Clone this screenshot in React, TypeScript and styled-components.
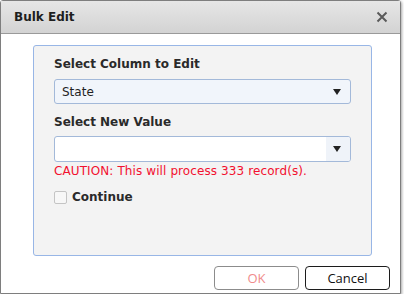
import React from 'react';
import styled, { createGlobalStyle } from 'styled-components';

const GlobalStyle = createGlobalStyle`
    html, body {
        margin: 0;
        padding: 0;
        background: #ffffff;
    }
    * {
        box-sizing: border-box;
    }
`;

const colors = {
    label: '#2a2a2a',
    panelBorder: '#98b6e6',
    fieldBorder: '#a3b9d9',
    caution: '#f2102f',
};

const Dialog = styled.div`
    width: 401px;
    height: 294px;
    border: 1px solid #7e7e7e;
    border-radius: 3px 3px 0 0;
    background: #ffffff;
    box-shadow: 1px 1px 3px rgba(0, 0, 0, 0.35);
    display: flex;
    flex-direction: column;
    font-family: 'DejaVu Sans', Verdana, sans-serif;
`;

const TitleBar = styled.div`
    height: 33px;
    flex: none;
    display: flex;
    align-items: center;
    justify-content: space-between;
    padding: 0 10px 0 13px;
    background: linear-gradient(#e6e6e6, #d3d3d3);
    border-bottom: 1px solid #9a9a9a;
`;

const Title = styled.span`
    font-size: 12px;
    font-weight: bold;
    color: #1e1e1e;
`;

const CloseButton = styled.button`
    width: 16px;
    height: 16px;
    padding: 0;
    border: 0;
    background: none;
    display: flex;
    align-items: center;
    justify-content: center;
    cursor: pointer;
`;

const Body = styled.div`
    flex: 1;
    display: flex;
    flex-direction: column;
    padding: 11px 10px 0 32px;
`;

const Panel = styled.div`
    width: 339px;
    height: 211px;
    border: 1px solid ${colors.panelBorder};
    border-radius: 3px;
    background: #f3f3f3;
    padding: 10px 20px 0 20px;
    display: flex;
    flex-direction: column;
`;

const Label = styled.div<{ $gap?: number }>`
    font-size: 12px;
    font-weight: bold;
    line-height: 16px;
    color: ${colors.label};
    margin-top: ${props => props.$gap || 0}px;
`;

const Field = styled.div<{ $height: number; $tinted?: boolean; $gap: number }>`
    height: ${props => props.$height}px;
    margin-top: ${props => props.$gap}px;
    border: 1px solid ${colors.fieldBorder};
    border-radius: 3px;
    background: ${props => (props.$tinted ? '#f1f5fb' : '#ffffff')};
    display: flex;
    align-items: stretch;
    overflow: hidden;
`;

const FieldValue = styled.div`
    flex: 1;
    display: flex;
    align-items: center;
    padding-left: 7px;
    font-size: 12px;
    color: #1f1f1f;
`;

const ArrowBox = styled.div<{ $tinted?: boolean }>`
    width: 24px;
    display: flex;
    align-items: center;
    justify-content: center;
    background: ${props => (props.$tinted ? 'transparent' : '#eff3f9')};
`;

const Arrow = styled.span`
    width: 0;
    height: 0;
    border-left: 4px solid transparent;
    border-right: 4px solid transparent;
    border-top: 6px solid #222;
    margin-right: 2px;
`;

const Caution = styled.div`
    margin-top: 1px;
    font-size: 12px;
    line-height: 16px;
    letter-spacing: 0.1px;
    color: ${colors.caution};
`;

const CheckRow = styled.label`
    margin-top: 10px;
    display: flex;
    align-items: center;
    gap: 5px;
    font-size: 12px;
    font-weight: bold;
    line-height: 16px;
    color: ${colors.label};
`;

const CheckBox = styled.span`
    width: 13px;
    height: 13px;
    border: 1px solid #c4c4c4;
    border-radius: 2px;
    background: #f7f7f7;
`;

const Footer = styled.div`
    display: flex;
    justify-content: flex-end;
    gap: 6px;
    padding-top: 10px;
`;

const Button = styled.button<{ $disabled?: boolean }>`
    width: 85px;
    height: 24px;
    border-radius: 4px;
    border: 1px solid ${props => (props.$disabled ? '#8c8c8c' : '#1c1c1c')};
    background: #ffffff;
    color: ${props => (props.$disabled ? '#f08c8c' : '#111111')};
    font-family: 'Open Sans', 'Noto Sans', sans-serif;
    font-size: 13px;
    padding: 0;
    line-height: 20px;
`;

type SelectProps = {
    value?: string;
    tinted?: boolean;
    height: number;
    gap: number;
};

const Select = ({ value, tinted, height, gap }: SelectProps) => (
    <Field $height={height} $tinted={tinted} $gap={gap}>
        <FieldValue>{value}</FieldValue>
        <ArrowBox $tinted={tinted}>
            <Arrow />
        </ArrowBox>
    </Field>
);

const App = () => {
    return (
        <>
            <GlobalStyle />
            <Dialog>
                <TitleBar>
                    <Title>Bulk Edit</Title>
                    <CloseButton aria-label="Close">
                        <svg width="12" height="12" viewBox="0 0 12 12">
                            <path d="M1.5 1.5 L10.5 10.5 M10.5 1.5 L1.5 10.5" stroke="#5a5a5a" strokeWidth="2" />
                        </svg>
                    </CloseButton>
                </TitleBar>
                <Body>
                    <Panel>
                        <Label>Select Column to Edit</Label>
                        <Select value="State" tinted height={25} gap={7} />
                        <Label $gap={10}>Select New Value</Label>
                        <Select height={26} gap={6} />
                        <Caution>CAUTION: This will process 333 record(s).</Caution>
                        <CheckRow>
                            <CheckBox />
                            Continue
                        </CheckRow>
                    </Panel>
                    <Footer>
                        <Button $disabled>OK</Button>
                        <Button>Cancel</Button>
                    </Footer>
                </Body>
            </Dialog>
        </>
    );
};

export default App;
